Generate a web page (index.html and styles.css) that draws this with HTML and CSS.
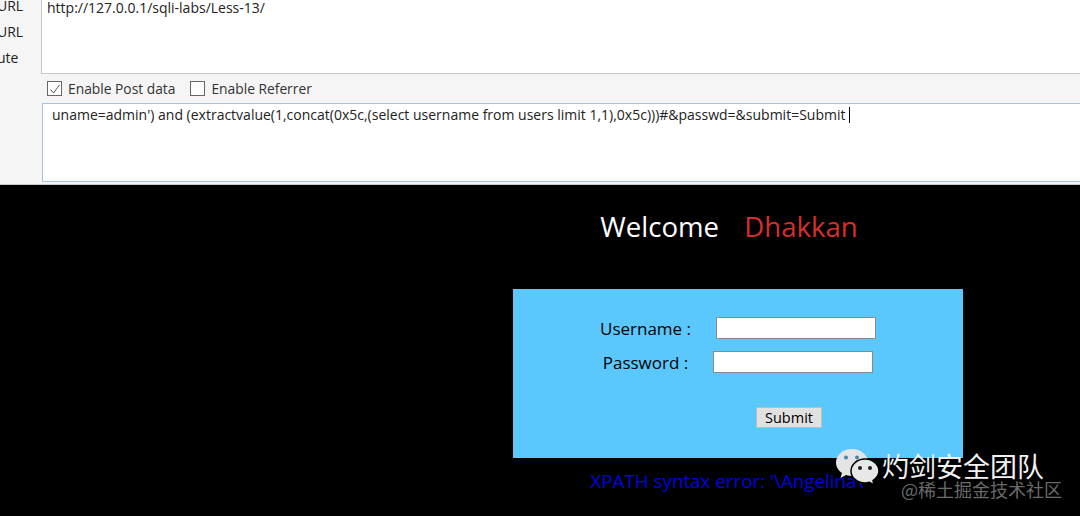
FILE: index.html
```html
<!DOCTYPE html>
<html lang="en">
<head>
    <meta charset="UTF-8">
    <meta name="viewport" content="width=device-width, initial-scale=1.0">
    <title>Less-13</title>
    <link rel="stylesheet" href="styles.css">
</head>
<body>

    <div class="hackbar">
        <div class="side-labels">
            <span>URL</span>
            <span>URL</span>
            <span>ute</span>
        </div>
        <div class="fields">
            <div class="url-box">http://127.0.0.1/sqli-labs/Less-13/</div>
            <div class="options">
                <label class="option"><span class="check"><svg width="14" height="14" viewBox="0 0 14 14"><path d="M2.5 7.5 L5.5 11 L11.5 3" fill="none" stroke="#555" stroke-width="1"/></svg></span>Enable Post data</label>
                <label class="option"><span class="check"></span>Enable Referrer</label>
            </div>
            <div class="post-box">uname=admin') and (extractvalue(1,concat(0x5c,(select username from users limit 1,1),0x5c)))#&amp;passwd=&amp;submit=Submit <span class="caret"></span></div>
        </div>
    </div>

    <div class="page">
        <div class="welcome">Welcome <span class="name">Dhakkan</span></div>

        <form class="login">
            <div class="login-row">
                <label class="login-label">Username :</label>
                <input class="login-input" type="text">
            </div>
            <div class="login-row">
                <label class="login-label">Password :</label>
                <input class="login-input" type="password">
            </div>
            <div class="submit-row">
                <button class="submit" type="button">Submit</button>
            </div>
        </form>

        <div class="sql-error">XPATH syntax error: '\Angelina\'</div>
    </div>

    <!-- watermark sits over the page -->
    <div class="wechat">
        <svg width="46" height="40" viewBox="0 0 46 40">
            <path d="M16 1 C7 1 0 7 0 14.5 C0 19 2.500 22.500 6 25 L4.500 30 L10 27 C12 27.700 14 28 16 28 C25 28 32 22 32 14.500 C32 7 25 1 16 1 Z" fill="#e4e4e4"/>
            <circle cx="10" cy="9.500" r="2" fill="#4a86a8"/>
            <circle cx="21" cy="9.500" r="2" fill="#4a86a8"/>
            <path d="M29 11 C21 11 15 16.500 15 23 C15 29.500 21 35 29 35 C30.500 35 32 34.800 33.500 34.300 L38 37 L37 32.500 C40.500 30 43 26.800 43 23 C43 16.500 37 11 29 11 Z" fill="#e8e8e8" stroke="#000" stroke-width="1.500"/>
            <circle cx="24" cy="20" r="2" fill="#222"/>
            <circle cx="34" cy="20" r="2" fill="#222"/>
        </svg>
        <span class="wechat-name">灼剑安全团队</span>
    </div>
    <div class="juejin">@稀土掘金技术社区</div>

</body>
</html>
```

FILE: styles.css
```css
html, body {
    margin: 0;
    height: 516px;
    overflow: hidden;
}
body {
    font-family: "Open Sans", "Noto Sans", Arial, sans-serif;
    background-color: #000;
    position: relative;
}
.hackbar {
    display: flex;
    height: 185px;
    background-color: #f5f5f5;
    box-sizing: border-box;
    border-bottom: 1px solid #c9c9c9;
    overflow: hidden;
}
.side-labels {
    width: 41px;
    flex-shrink: 0;
    display: flex;
    flex-direction: column;
    gap: 7px;
    margin-top: -4px;
    margin-left: -3px;
    padding-right: 3px;
    font-size: 14px;
    line-height: 19px;
    color: #222;
}
.fields {
    flex: 1;
    min-width: 0;
}
.url-box {
    box-sizing: border-box;
    padding: 0 5px;
    margin-top: -3px;
    background: #fff;
    border: 1px solid #c8c8c8;
    border-right: none;
    font-size: 14px;
    line-height: 19px;
    color: #222;
    height: 77px;
}
.options {
    display: flex;
    gap: 15px;
    height: 29px;
    align-items: center;
    padding-left: 6px;
    font-size: 13.8px;
    color: #333;
}
.option {
    display: flex;
    align-items: center;
    gap: 6px;
}
.check {
    width: 13px;
    height: 13px;
    border: 1px solid #666;
    background: #fff;
    display: block;
}
.check svg {
    display: block;
}
.post-box {
    height: 79px;
    box-sizing: border-box;
    margin-left: 1px;
    padding: 1px 9px;
    background: #fff;
    border: 1px solid #a9c3df;
    border-right: none;
    font-size: 14px;
    line-height: 19px;
    color: #222;
    white-space: nowrap;
}
.caret {
    display: inline-block;
    width: 1px;
    height: 16px;
    background: #000;
    vertical-align: -3px;
}
.page {
    padding-left: 513px;
    width: 450px;
}
.welcome {
    width: 450px;
    margin-top: 22px;
    height: 38px;
    padding-right: 18px;
    box-sizing: border-box;
    text-align: center;
    font-size: 27.6px;
    line-height: 38px;
    color: #fff;
    white-space: pre;
}
.name {
    color: #d5302a;
    margin-left: 18px;
}
.login {
    margin: 44px 0 0;
    height: 169px;
    box-sizing: border-box;
    padding-top: 22px;
    background-color: #5bc8fd;
}
.login-row {
    display: flex;
    justify-content: center;
    align-items: center;
    gap: 25px;
    height: 34px;
    font-size: 17px;
    color: #000;
}
.login-input {
    width: 160px;
    height: 22px;
    box-sizing: border-box;
    padding: 0;
    background: #fff;
    border: 1px solid #8a8a8a;
}
.submit-row {
    display: flex;
    justify-content: center;
    margin-top: 28px;
    padding-left: 102px;
}
.submit {
    width: 66px;
    height: 21px;
    padding: 0;
    font-family: inherit;
    font-size: 14.5px;
    color: #000;
    background: #e1e1e1;
    border: 1px solid #bdbdbd;
}
.sql-error {
    margin-top: 11px;
    width: 432px;
    text-align: center;
    font-size: 18.8px;
    line-height: 25px;
    color: #0000e0;
    white-space: nowrap;
}
.wechat {
    position: absolute;
    left: 836px;
    top: 448px;
    display: flex;
    align-items: flex-start;
}
.wechat-name {
    margin-left: 0;
    margin-top: 4px;
    font-family: "Noto Sans CJK SC", sans-serif;
    font-size: 27px;
    line-height: 28px;
    color: #f2f2f2;
    white-space: nowrap;
}
.juejin {
    position: absolute;
    left: 901px;
    top: 480px;
    font-family: "Noto Sans CJK SC", sans-serif;
    font-size: 18px;
    line-height: 18px;
    color: #6a6a6a;
    white-space: nowrap;
}
```
